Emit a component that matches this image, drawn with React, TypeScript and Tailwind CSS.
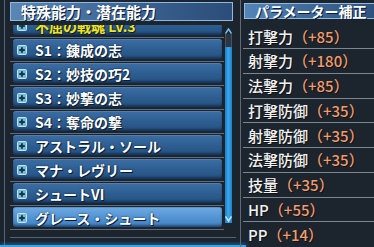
import React from "react";

type Skill = {
    label: string;
    active?: boolean;
    yellow?: boolean;
};

const skills: Skill[] = [
    { label: "不屈の戦魂 Lv.3", yellow: true },
    { label: "S1：錬成の志" },
    { label: "S2：妙技の巧2" },
    { label: "S3：妙撃の志" },
    { label: "S4：奪命の撃" },
    { label: "アストラル・ソール" },
    { label: "マナ・レヴリー" },
    { label: "シュートVI" },
    { label: "グレース・シュート", active: true },
];

const params = [
    { label: "打撃力", value: "（+85）" },
    { label: "射撃力", value: "（+180）" },
    { label: "法撃力", value: "（+85）" },
    { label: "打撃防御", value: "（+35）" },
    { label: "射撃防御", value: "（+35）" },
    { label: "法撃防御", value: "（+35）" },
    { label: "技量", value: "（+35）" },
    { label: "HP", value: "（+55）" },
    { label: "PP", value: "（+14）" },
];

function PlusIcon() {
    return (
        <svg width="10" height="10" viewBox="0 0 10 10" className="shrink-0">
            <rect x="0.5" y="0.5" width="9" height="9" rx="1" fill="#79b9d6" stroke="#bfe4f4" />
            <path d="M5 2.2V7.8M2.2 5H7.8" stroke="#103c4c" strokeWidth="2" />
        </svg>
    );
}

function SkillRow({ skill }: { skill: Skill }) {
    return (
        <div className="h-[24px] shrink-0 flex flex-col">
            <div
                className={`h-[20px] ml-[3px] w-[209px] rounded-[3px] flex items-center gap-[8px] pl-[4px] border-t border-[#6f9fcf]/60 shadow-[inset_0_-2px_2px_rgba(10,30,60,0.5)] ${
                    skill.active
                        ? "bg-linear-to-b from-[#6aa9e2] to-[#3e7fc2]"
                        : "bg-linear-to-b from-[#3a6ca4] to-[#22507f]"
                }`}
            >
                <PlusIcon />
                <span
                    className={`text-[14px] leading-none font-bold whitespace-nowrap [text-shadow:1px_1px_0_#0b1d33,0_0_2px_#0b1d33] ${
                        skill.yellow ? "text-[#f2e41c]" : "text-white"
                    }`}
                >
                    {skill.label}
                </span>
            </div>
            <div className="h-[4px] flex flex-col justify-center">
                <div className="h-[1px] bg-[#7e8b99]/70" />
            </div>
        </div>
    );
}

export default function App() {
    return (
        <div className="w-[374px] h-[247px] overflow-hidden flex bg-[#1c242e] font-['Noto_Sans_CJK_JP','Liberation_Sans',sans-serif]">

            {/* LEFT: special abilities list */}
            <div className="w-[236px] shrink-0 pl-[4px] flex flex-col">
                <div className="flex-1 border-l border-[#53687d] pl-[5px] pt-[2px] flex flex-col">
                    <div className="h-[19px] w-[223px] border border-[#8fb9df] bg-linear-to-r from-[#5a86b6] via-[#3d6596] to-[#2b4d78] flex items-center pl-[10px]">
                        <span className="text-[15px] leading-none font-bold text-white [text-shadow:1px_1px_0_#0b1d33]">
                            特殊能力・潜在能力
                        </span>
                    </div>

                    <div className="flex h-[206px] mt-[4px]">
                        <div className="w-[214px] overflow-hidden">
                            <div className="-mt-[10px] flex flex-col">
                                {skills.map((s) => (
                                    <SkillRow key={s.label} skill={s} />
                                ))}
                            </div>
                        </div>

                        {/* scrollbar */}
                        <div className="ml-[1px] w-[7px] pt-[3px] flex flex-col items-center">
                            <svg width="7" height="6" viewBox="0 0 7 6">
                                <path d="M0.5 5.5L3.5 1L6.5 5.5" fill="none" stroke="#6fc4f2" strokeWidth="1.5" />
                            </svg>
                            <div className="w-[7px] h-[13px] bg-[#2b3642] border-x border-[#45525f]" />
                            <div className="w-[7px] h-[176px] bg-linear-to-r from-[#1b7fc9] via-[#3aa6ec] to-[#1b7fc9] flex flex-col justify-end items-center pb-[1px]">
                                <svg width="7" height="6" viewBox="0 0 7 6">
                                    <path d="M0.5 0.5L3.5 5L6.5 0.5" fill="none" stroke="#bfe6ff" strokeWidth="1.5" />
                                </svg>
                            </div>
                        </div>
                    </div>

                    <div className="mt-[2px] h-[5px] w-[226px] border-b border-[#4f6478]" />
                </div>
                <div className="h-[2px] -ml-[4px] w-[246px] bg-[#39a4ee] shadow-[0_0_4px_#39a4ee]" />
            </div>

            {/* RIGHT: parameter bonuses */}
            <div className="flex-1 pl-[4px] flex">
                <div className="flex-1 border-l border-[#5f6a76] pt-[3px] flex flex-col">
                    <div className="ml-[3px] h-[18px] border border-[#8fb9df] border-r-0 bg-linear-to-r from-[#5485b8] via-[#3e6898] to-[#2e5280] flex items-center pl-[10px]">
                        <span className="text-[14px] leading-none font-bold text-white whitespace-nowrap [text-shadow:1px_1px_0_#0b1d33]">
                            パラメーター補正
                        </span>
                    </div>

                    <div className="mt-[5px] flex flex-col">
                        {params.map((p, i) => (
                            <div
                                key={p.label}
                                className={`h-[24.75px] ml-[2px] flex items-center pl-[5px] ${
                                    i < params.length - 1 ? "border-b border-[#7c8690]" : ""
                                }`}
                            >
                                <span className="text-[15px] leading-none font-medium text-[#f2f2f2] whitespace-nowrap [text-shadow:1px_1px_0_#111]">
                                    {p.label}
                                </span>
                                <span className="text-[15px] leading-none font-medium text-[#f39c6b] whitespace-nowrap [text-shadow:1px_1px_0_#111]">
                                    {p.value}
                                </span>
                            </div>
                        ))}
                    </div>
                </div>
            </div>
        </div>
    );
}
